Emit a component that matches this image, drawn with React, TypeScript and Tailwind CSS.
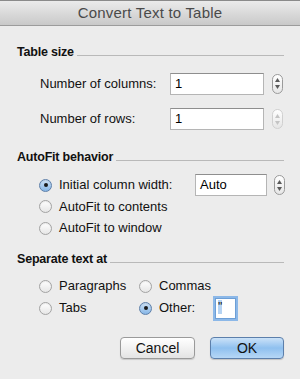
import React from 'react';

// ─── Small Aqua-style controls ───

function Stepper({ disabled }: { disabled?: boolean }) {
  const c = disabled ? '#c4c4c4' : '#5a5a5a';
  return (
    <div className={`w-[11px] h-[20px] rounded-full border flex flex-col items-center justify-center gap-[3px] bg-gradient-to-b from-[#ffffff] to-[#e6e6e6] ${disabled ? 'border-[#d0d0d0]' : 'border-[#9a9a9a]'}`}>
      <svg width="5" height="4" viewBox="0 0 5 4"><path d="M2.5 0 L5 4 L0 4 Z" fill={c} /></svg>
      <svg width="5" height="4" viewBox="0 0 5 4"><path d="M0 0 L5 0 L2.5 4 Z" fill={c} /></svg>
    </div>
  );
}

function Radio({ checked }: { checked?: boolean }) {
  return (
    <span className={`w-[13px] h-[13px] rounded-full border flex items-center justify-center shrink-0 shadow-[inset_0_1px_1px_rgba(0,0,0,0.08)] ${checked ? 'border-[#5d7fa9] bg-gradient-to-b from-[#cfe3f7] to-[#86b6e6]' : 'border-[#a3a3a3] bg-gradient-to-b from-[#ffffff] to-[#e6e6e6]'}`}>
      {checked && <span className="w-[4px] h-[4px] rounded-full bg-[#1a1a1a]" />}
    </span>
  );
}

function TextBox({ value, className }: { value: string; className?: string }) {
  return (
    <div className={`h-[22px] bg-white border border-[#b5b5b5] border-t-[#8e8e8e] flex items-center px-[4px] text-[13px] text-black ${className ?? ''}`}>
      {value}
    </div>
  );
}

function GroupHeading({ children }: { children: React.ReactNode }) {
  return (
    <div className="flex items-center h-[16px] pr-[16px]">
      <span className="font-bold text-[12.5px] tracking-[-0.2px] text-[#111] mr-[3px]">{children}</span>
      <span className="flex-1 h-px bg-[#b9b9b9] mt-[6px]" />
    </div>
  );
}

export default function App() {
  return (
    <div className="w-[300px] h-[379px] bg-[#ececec] flex flex-col text-[13px] text-[#111]" style={{ fontFamily: '"Liberation Sans", Arial, sans-serif' }}>
      {/* Title bar */}
      <div className="h-[26px] shrink-0 bg-gradient-to-b from-[#ebebeb] to-[#c9c9c9] border-t border-[#8a8a8a] border-b border-b-[#9c9c9c] flex items-center justify-center">
        <span className="text-[15px] text-[#4a4a4a] tracking-[0.2px]">Convert Text to Table</span>
      </div>

      <div className="flex flex-col pl-[17px] pt-[18px]">
        <GroupHeading>Table size</GroupHeading>

        <div className="flex items-center h-[21px] mt-[13px] pl-[23px]">
          <span className="w-[130px]">Number of columns:</span>
          <TextBox value="1" className="w-[94px] h-[21px]" />
          <span className="ml-[8px]"><Stepper /></span>
        </div>
        <div className="flex items-center h-[22px] mt-[14px] pl-[23px]">
          <span className="w-[130px]">Number of rows:</span>
          <TextBox value="1" className="w-[94px]" />
          <span className="ml-[8px]"><Stepper disabled /></span>
        </div>

        <div className="mt-[19px]">
          <GroupHeading>AutoFit behavior</GroupHeading>
        </div>

        <div className="flex flex-col pl-[22px] mt-[9px]">
          <div className="flex items-center h-[22px]">
            <Radio checked />
            <span className="ml-[7px] w-[136px]">Initial column width:</span>
            <TextBox value="Auto" className="w-[72px]" />
            <span className="ml-[7px]"><Stepper /></span>
          </div>
          <div className="flex items-center h-[21px]">
            <Radio />
            <span className="ml-[7px]">AutoFit to contents</span>
          </div>
          <div className="flex items-center h-[22px]">
            <Radio />
            <span className="ml-[7px]">AutoFit to window</span>
          </div>
        </div>

        <div className="mt-[12px]">
          <GroupHeading>Separate text at</GroupHeading>
        </div>

        <div className="grid grid-cols-[100px_1fr] pl-[22px] mt-[8px]">
          <div className="flex items-center h-[22px]">
            <Radio />
            <span className="ml-[7px]">Paragraphs</span>
          </div>
          <div className="flex items-center h-[22px]">
            <Radio />
            <span className="ml-[7px]">Commas</span>
          </div>
          <div className="flex items-center h-[22px]">
            <Radio />
            <span className="ml-[7px]">Tabs</span>
          </div>
          <div className="flex items-center h-[22px]">
            <Radio checked />
            <span className="ml-[7px] w-[56px]">Other:</span>
            <div className="w-[21px] h-[21px] bg-white border border-[#6d9fd6] shadow-[0_0_0_2px_#8cb8e8] flex items-start px-[2px] pt-[1px] text-[12px] leading-[14px]">
              <span className="bg-[#b5d3f3]">"</span>
            </div>
          </div>
        </div>

        <div className="flex justify-end gap-[15px] pr-[16px] mt-[18px]">
          <button className="w-[75px] h-[22px] rounded-[4px] border border-[#9a9a9a] bg-gradient-to-b from-[#ffffff] to-[#e4e4e4] shadow-[0_1px_1px_rgba(0,0,0,0.15)] text-[14px] text-[#111]">Cancel</button>
          <button className="w-[74px] h-[22px] rounded-[4px] border border-[#5c7fab] bg-gradient-to-b from-[#cbe2f8] via-[#8fc0ef] to-[#b6d7f6] shadow-[0_1px_1px_rgba(0,0,0,0.18)] text-[14px] text-[#111]">OK</button>
        </div>
      </div>
    </div>
  );
}
